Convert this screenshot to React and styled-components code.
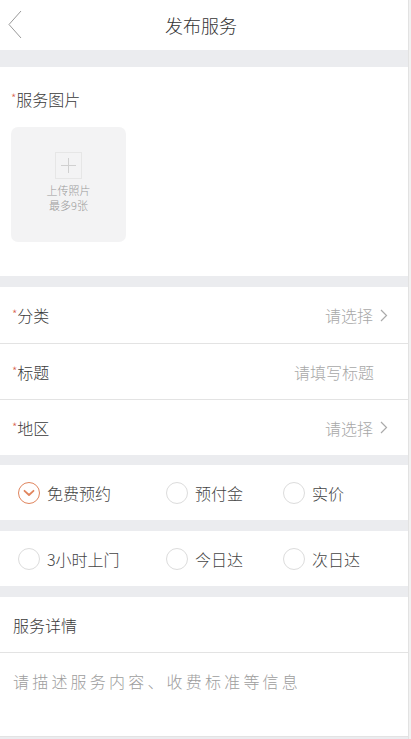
import React from "react";
import styled, { createGlobalStyle } from "styled-components";

const GlobalStyle = createGlobalStyle`
  html, body {
    margin: 0;
    padding: 0;
    background: #f1f1f1;
    font-family: "Noto Sans CJK SC", "Noto Sans", sans-serif;
    font-weight: 300;
  }
`;

const Page = styled.div`
  width: 408px;
  min-height: 739px;
  background: #ebecef;
  border-right: 1px solid #e2e2e2;
  color: #333;
`;

const Header = styled.div`
  position: relative;
  height: 50px;
  background: #fff;
  display: flex;
  align-items: center;
  justify-content: center;
  padding-right: 6px;
  font-size: 18px;
  line-height: 24px;
  color: #333;
`;

const Back = styled.svg`
  position: absolute;
  left: 7px;
  top: 10px;
`;

const Section = styled.div`
  background: #fff;
  margin-top: ${(p) => p.gap || 0}px;
`;

const PhotoBlock = styled.div`
  padding: 20px 11px 34px;
`;

const Label = styled.div`
  font-size: 16px;
  line-height: 24px;
  color: #3a3a3a;
`;

const Star = styled.span`
  position: relative;
  top: -3px;
  color: #d9634f;
  font-size: 12px;
  line-height: 1;
`;

const Upload = styled.div`
  margin-top: 16px;
  width: 115px;
  height: 115px;
  border-radius: 7px;
  background: #f3f3f4;
  display: flex;
  flex-direction: column;
  align-items: center;
  padding-top: 25px;
  box-sizing: border-box;
`;

const PlusBox = styled.div`
  width: 25px;
  height: 25px;
  border: 1px solid #e6e6e6;
  display: flex;
  align-items: center;
  justify-content: center;
  margin-bottom: 4px;
`;

const UploadText = styled.div`
  font-size: 11px;
  line-height: 15px;
  color: #9a9a9a;
  text-align: center;
`;

const Row = styled.div`
  height: 56px;
  display: flex;
  align-items: center;
  justify-content: space-between;
  padding: 0 20px 0 12px;
  box-sizing: border-box;
  border-top: ${(p) => (p.first ? "none" : "1px solid #e3e3e3")};
`;

const Value = styled.div`
  display: flex;
  align-items: center;
  gap: 7px;
  font-size: 16px;
  line-height: 24px;
  color: #a8a8a8;
  margin-right: ${(p) => (p.noArrow ? 14 : 0)}px;
`;

const Options = styled.div`
  height: 55px;
  display: grid;
  grid-template-columns: 148px 117px 1fr;
  align-items: center;
  padding-left: 18px;
`;

const Option = styled.div`
  display: flex;
  align-items: center;
  gap: 7px;
  font-size: 16px;
  line-height: 24px;
  color: #444;
`;

const Circle = styled.div`
  width: 20px;
  height: 20px;
  border-radius: 50%;
  border: 1px solid ${(p) => (p.checked ? "#e0855e" : "#dcdcdc")};
  display: flex;
  align-items: center;
  justify-content: center;
`;

const DetailHead = styled.div`
  height: 55px;
  display: flex;
  align-items: center;
  padding-left: 13px;
  border-bottom: 1px solid #e3e3e3;
`;

const Detail = styled.textarea`
  display: block;
  width: 100%;
  height: 84px;
  box-sizing: border-box;
  border: none;
  outline: none;
  resize: none;
  padding: 16px 13px;
  font-family: "Noto Sans CJK SC", sans-serif;
  font-weight: 300;
  font-size: 16px;
  letter-spacing: 3.2px;
  color: #333;
  background: #fff;
  border-bottom: 1px solid #e3e3e3;
  &::placeholder {
    color: #9d9d9d;
  }
`;

const Chevron = () => (
  <svg width="8" height="13" viewBox="0 0 8 13">
    <path d="M1 1l5.5 5.5L1 12" fill="none" stroke="#aaa" strokeWidth="1.2" />
  </svg>
);

const Radio = ({ checked, children }) => (
  <Option>
    <Circle checked={checked}>
      {checked && (
        <svg width="12" height="8" viewBox="0 0 12 8">
          <path d="M1.5 1.8l4.5 4.2 4.5-4.2" fill="none" stroke="#e0855e" strokeWidth="1.8" strokeLinecap="round" strokeLinejoin="round" />
        </svg>
      )}
    </Circle>
    {children}
  </Option>
);

const Req = ({ children }) => (
  <Label>
    <Star>*</Star>
    {children}
  </Label>
);

export default function App() {
  return (
    <>
      <GlobalStyle />
      <Page>
        <Header>
          <Back width="16" height="29" viewBox="0 0 16 29">
            <path d="M14 1L2 14.5 14 28" fill="none" stroke="#999" strokeWidth="1" />
          </Back>
          发布服务
        </Header>

        <Section gap={17}>
          <PhotoBlock>
            <Req>服务图片</Req>
            <Upload>
              <PlusBox>
                <svg width="15" height="15" viewBox="0 0 15 15">
                  <path d="M7.5 0v15M0 7.5h15" stroke="#d0d0d0" strokeWidth="1" />
                </svg>
              </PlusBox>
              <UploadText>上传照片</UploadText>
              <UploadText>最多9张</UploadText>
            </Upload>
          </PhotoBlock>
        </Section>

        <Section gap={11}>
          <Row first>
            <Req>分类</Req>
            <Value>
              请选择 <Chevron />
            </Value>
          </Row>
          <Row>
            <Req>标题</Req>
            <Value noArrow>请填写标题</Value>
          </Row>
          <Row>
            <Req>地区</Req>
            <Value>
              请选择 <Chevron />
            </Value>
          </Row>
        </Section>

        <Section gap={10}>
          <Options>
            <Radio checked>免费预约</Radio>
            <Radio>预付金</Radio>
            <Radio>实价</Radio>
          </Options>
        </Section>

        <Section gap={11}>
          <Options>
            <Radio>3小时上门</Radio>
            <Radio>今日达</Radio>
            <Radio>次日达</Radio>
          </Options>
        </Section>

        <Section gap={11}>
          <DetailHead>
            <Label>服务详情</Label>
          </DetailHead>
          <Detail placeholder="请描述服务内容、收费标准等信息" />
        </Section>
      </Page>
    </>
  );
}
